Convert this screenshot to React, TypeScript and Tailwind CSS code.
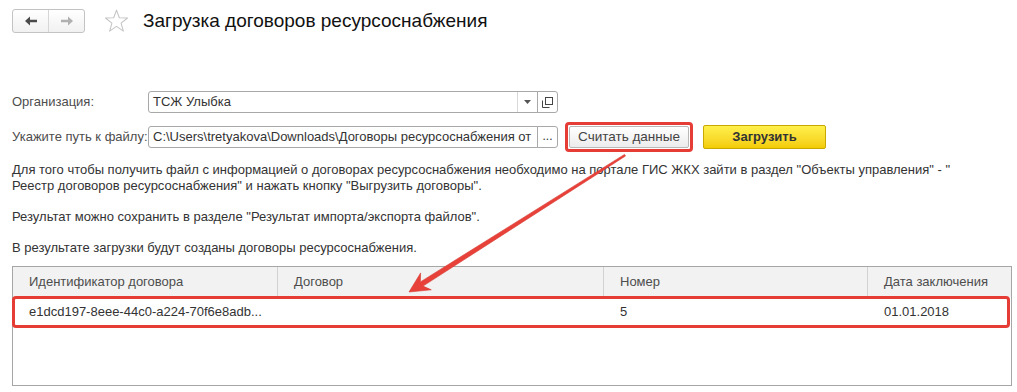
import { ChevronDown } from 'lucide-react';

function NavArrow({ dir, color }: { dir: 'left' | 'right'; color: string }) {
  return (
    <svg width="12" height="10" viewBox="0 0 12 10">
      {dir === 'left' ? (
        <path d="M0 5 L5 0.5 V3.8 H12 V6.2 H5 V9.5 Z" fill={color} />
      ) : (
        <path d="M12 5 L7 0.5 V3.8 H0 V6.2 H7 V9.5 Z" fill={color} />
      )}
    </svg>
  );
}

function Star() {
  return (
    <svg width="25" height="24" viewBox="0 0 24 23">
      <path
        d="M12 1 L14.7 8.4 L22.6 8.6 L16.4 13.5 L18.6 21.2 L12 16.7 L5.4 21.2 L7.6 13.5 L1.4 8.6 L9.3 8.4 Z"
        fill="none"
        stroke="#c4c4c4"
        strokeWidth="1"
        strokeLinejoin="round"
      />
    </svg>
  );
}

function OpenIcon() {
  return (
    <svg width="11" height="11" viewBox="0 0 11 11">
      <rect x="3.5" y="0.5" width="7" height="7" fill="none" stroke="#444" strokeWidth="1" />
      <path d="M0.5 3.5 V10.5 H7.5" fill="none" stroke="#444" strokeWidth="1" />
    </svg>
  );
}

function RedArrow() {
  return (
    <svg className="absolute inset-0 pointer-events-none" width="1017" height="392" viewBox="0 0 1017 392">
      <polygon
        points="625.5,156 423,286.1 431.3,289.8 409,292 420.6,272.9 420.4,281.9 624.5,154.4"
        fill="#e8413a"
        stroke="#d63a33"
        strokeWidth="0.6"
        strokeLinejoin="round"
      />
    </svg>
  );
}

export default function App() {
  return (
    <div className="relative w-[1017px] h-[392px] overflow-hidden bg-white font-['Liberation_Sans',Arial,sans-serif] text-[13px] text-[#333]">
      {/* Header */}
      <div className="flex items-center pl-3 pt-[9px]">
        <div className="flex h-[24px] w-[73px] rounded-[3px] border border-[#c3c3c3] bg-gradient-to-b from-white to-[#f1f1f1]">
          <div className="flex w-[36px] items-center justify-center border-r border-[#d6d6d6]">
            <NavArrow dir="left" color="#4a4a4a" />
          </div>
          <div className="flex flex-1 items-center justify-center">
            <NavArrow dir="right" color="#b0b0b0" />
          </div>
        </div>
        <div className="ml-[19px] flex items-center">
          <Star />
        </div>
        <h1 className="ml-[14px] text-[19px] leading-[24px] text-[#111]">Загрузка договоров ресурсоснабжения</h1>
      </div>

      {/* Organization */}
      <div className="mt-[58px] flex h-[22px] items-center pl-3">
        <span className="w-[136px] text-[#4d4d4d]">Организация:</span>
        <div className="flex h-[22px] w-[390px] items-center rounded-l-[3px] border border-[#a8a8a8]">
          <span className="flex-1 pl-[4px]">ТСЖ Улыбка</span>
          <span className="flex h-full w-[20px] items-center justify-center border-l border-[#d8d8d8]">
            <svg width="7" height="4" viewBox="0 0 7 4">
              <path d="M0 0 H7 L3.5 4 Z" fill="#555" />
            </svg>
          </span>
        </div>
        <div className="-ml-px flex h-[22px] w-[21px] items-center justify-center rounded-r-[3px] border border-[#a8a8a8]">
          <OpenIcon />
        </div>
      </div>

      {/* File path */}
      <div className="mt-[13px] flex h-[22px] items-center pl-3">
        <span className="w-[136px] text-[#4d4d4d]">Укажите путь к файлу:</span>
        <div className="flex h-[22px] w-[390px] items-center overflow-hidden whitespace-nowrap rounded-l-[3px] border border-[#a8a8a8] pl-[4px]">
          C:\Users\tretyakova\Downloads\Договоры ресурсоснабжения от
        </div>
        <div className="-ml-px flex h-[22px] w-[21px] items-center justify-center rounded-r-[3px] border border-[#a8a8a8] pb-[2px] text-[12px]">
          ...
        </div>
        <div className="ml-[7px] flex rounded-[4px] border-[3px] border-[#e53c35] p-px">
          <button className="h-[22px] w-[120px] rounded-[2px] border border-[#b8b8b8] bg-gradient-to-b from-white to-[#ececec] text-[13.5px] text-[#444]">
            Считать данные
          </button>
        </div>
        <button className="ml-[10px] h-[24px] w-[123px] rounded-[2px] border border-[#c9a900] bg-gradient-to-b from-[#fff04a] to-[#f3cc00] text-[13px] font-bold text-[#333]">
          Загрузить
        </button>
      </div>

      {/* Description */}
      <div className="mt-[14px] pl-3 leading-[15.6px] text-[#333]">
        <p>
          Для того чтобы получить файл с информацией о договорах ресурсоснабжения необходимо на портале ГИС ЖКХ зайти в раздел "Объекты управления" - "
          <br />
          Реестр договоров ресурсоснабжения" и нажать кнопку "Выгрузить договоры".
        </p>
        <p className="mt-[15.6px]">Результат можно сохранить в разделе "Результат импорта/экспорта файлов".</p>
        <p className="mt-[15.6px]">В результате загрузки будут созданы договоры ресурсоснабжения.</p>
      </div>

      {/* Table */}
      <div className="ml-3 mt-[10px] h-[120px] w-[1000px] border border-[#a6a6a6]">
        <div className="flex h-[30px] items-center bg-[#f2f2f2] text-[#4d4d4d]">
          <div className="w-[264px] pl-4">Идентификатор договора</div>
          <div className="flex h-full w-[326px] items-center border-l border-[#d2d2d2] pl-4">Договор</div>
          <div className="flex h-full w-[264px] items-center border-l border-[#d2d2d2] pl-4">Номер</div>
          <div className="flex h-full flex-1 items-center border-l border-[#d2d2d2] pl-4">Дата заключения</div>
        </div>
        <div className="relative flex h-[30px] items-center">
          <div className="w-[264px] pl-4">e1dcd197-8eee-44c0-a224-70f6e8adb...</div>
          <div className="w-[327px] pl-4"></div>
          <div className="w-[264px] pl-4">5</div>
          <div className="flex-1 pl-4">01.01.2018</div>
          <div className="absolute -left-px -top-[1px] -bottom-[1px] right-[1px] rounded-[4px] border-[3px] border-[#e53c35]" />
        </div>
      </div>

      <RedArrow />
    </div>
  );
}
